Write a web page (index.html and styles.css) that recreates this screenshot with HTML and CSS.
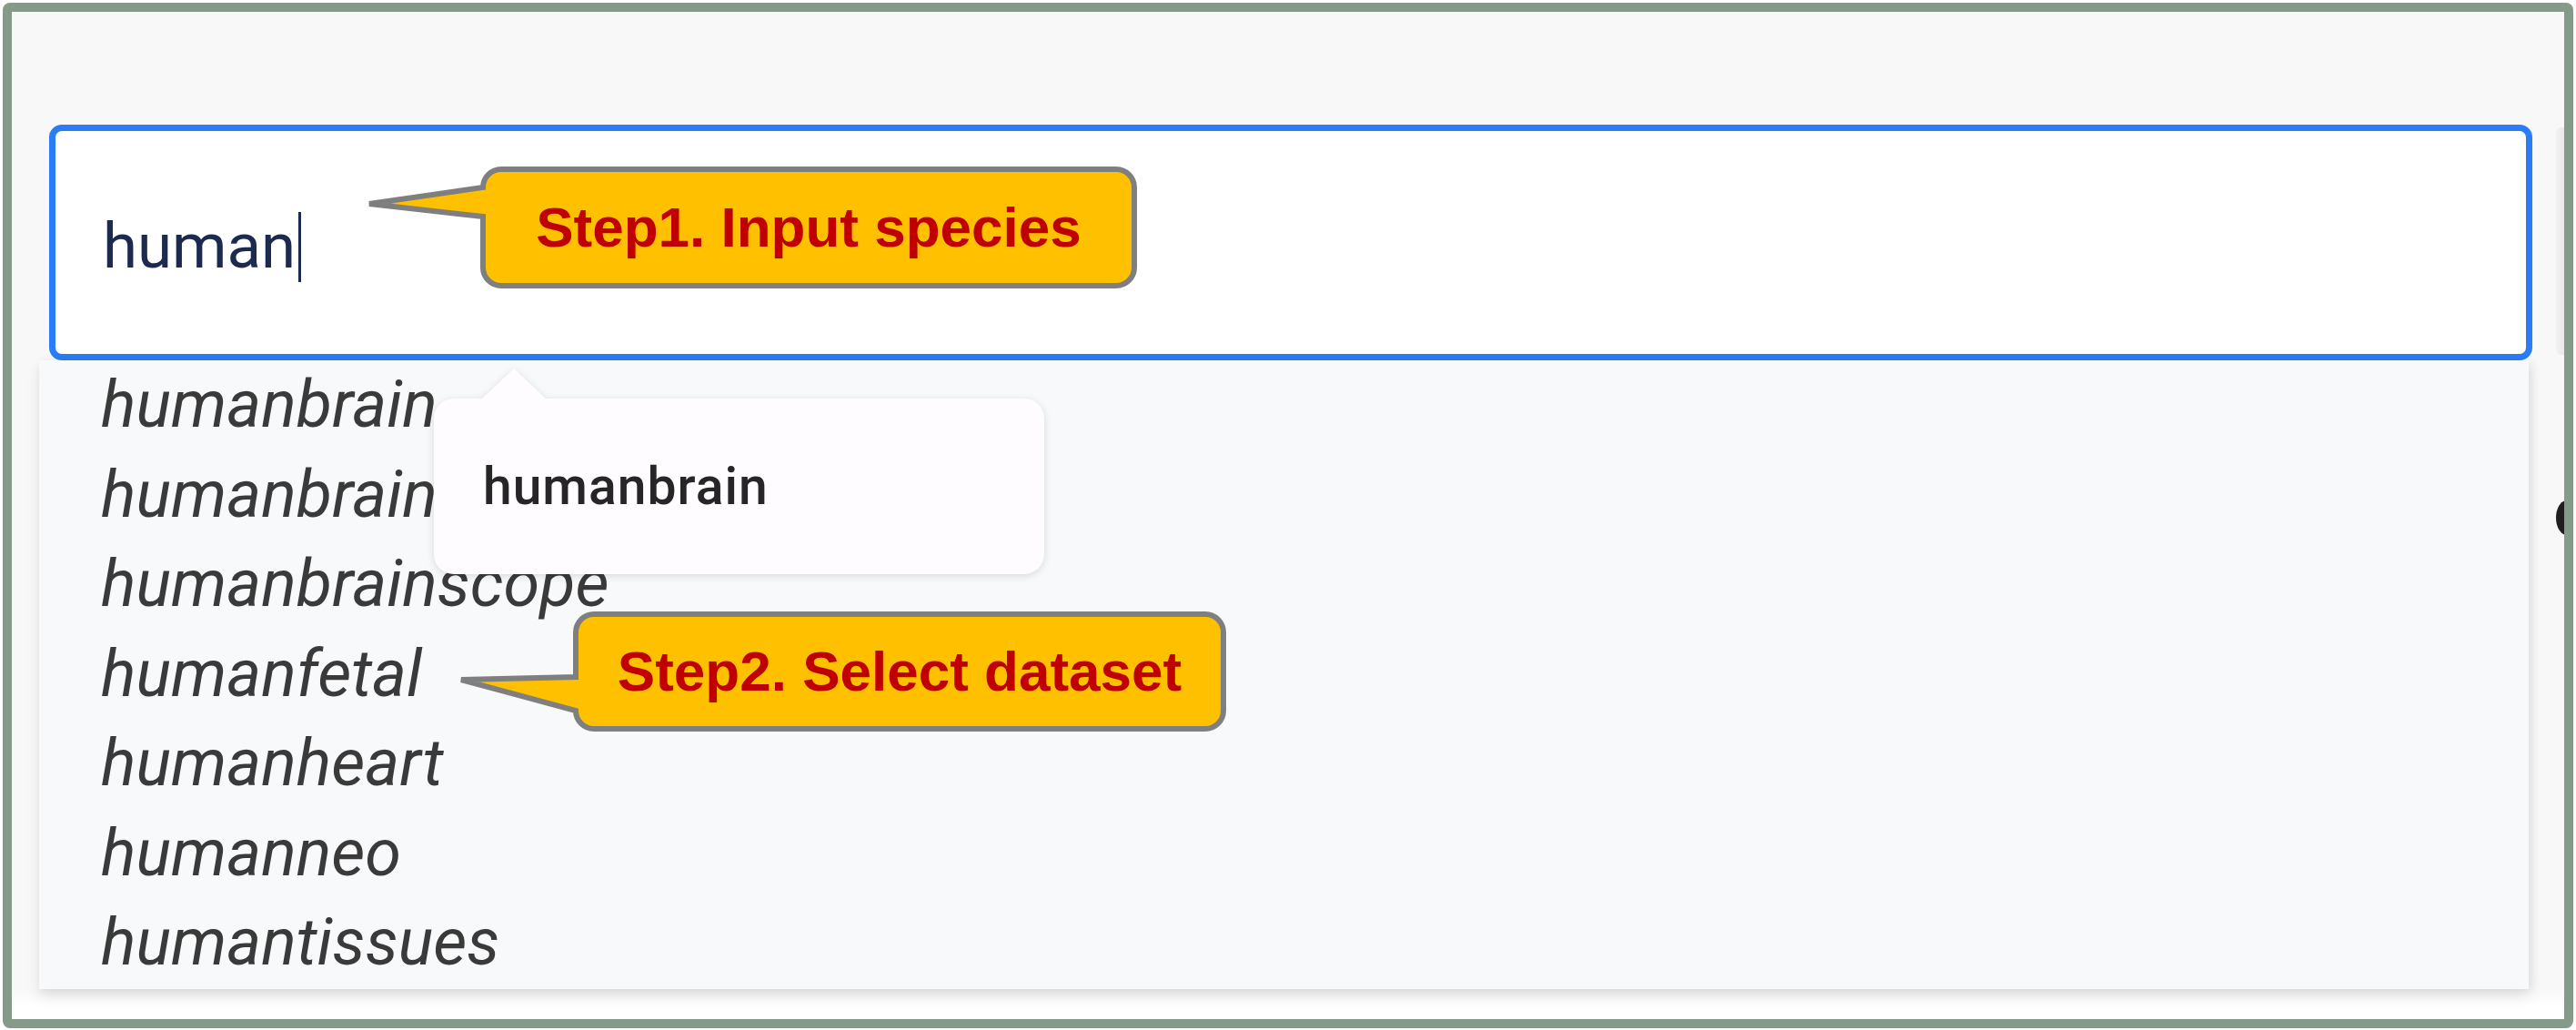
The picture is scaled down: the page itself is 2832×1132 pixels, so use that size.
FILE: index.html
```html
<!DOCTYPE html>
<html lang="en">
<head>
<meta charset="utf-8">
<title>Dataset search</title>
<link rel="stylesheet" href="styles.css">
</head>
<body>
<div class="frame">
  <div class="input-row">
    <div class="search-input"><span class="query">human</span><span class="caret"></span></div>
    <div class="side-strip"></div>
  </div>
  <div class="list-row">
    <ul class="dropdown">
      <li>humanbrain</li>
      <li>humanbrain</li>
      <li>humanbrainscope</li>
      <li>humanfetal</li>
      <li>humanheart</li>
      <li>humanneo</li>
      <li>humantissues</li>
    </ul>
    <div class="side-knob"></div>
  </div>

  <div class="tooltip"><div class="tooltip-card">humanbrain</div></div>

  <div class="callout callout-1">
    <svg class="callout-shape" width="852" height="134" viewBox="-130 0 852 134">
      <path d="M23,3 H699 A20,20 0 0 1 719,23 V111 A20,20 0 0 1 699,131 H23 A20,20 0 0 1 3,111 V55 L-122,41 L3,23 A20,20 0 0 1 23,3 Z"/>
    </svg>
    <span class="callout-text">Step1. Input species</span>
  </div>

  <div class="callout callout-2">
    <svg class="callout-shape" width="848" height="132" viewBox="-130 0 848 132">
      <path d="M23,3 H695 A20,20 0 0 1 715,23 V109 A20,20 0 0 1 695,129 H23 A20,20 0 0 1 3,109 L-123,75 L3,72 V23 A20,20 0 0 1 23,3 Z"/>
    </svg>
    <span class="callout-text">Step2. Select dataset</span>
  </div>
</div>
</body>
</html>
```

FILE: styles.css
```css
html, body {
  margin: 0;
  padding: 0;
  background: #ffffff;
}

body {
  width: 2832px;
  height: 1132px;
  overflow: hidden;
}

.frame {
  position: relative;
  box-sizing: border-box;
  margin: 3px;
  width: 2826px;
  height: 1127px;
  border: 10px solid #869a89;
  border-radius: 8px;
  background: linear-gradient(#f8f8f8 0, #f8f8f8 1075px, #ffffff 1092px);
  overflow: hidden;
  padding: 124px 0 0 30px;
  font-family: Roboto, "Liberation Sans", Arial, sans-serif;
}

.input-row {
  display: flex;
  align-items: flex-start;
  gap: 26px;
  margin-left: 11px;
}

.search-input {
  box-sizing: border-box;
  flex: 0 0 2730px;
  height: 259px;
  border: 7px solid #2b7df7;
  border-radius: 14px;
  background: #ffffff;
  display: flex;
  align-items: center;
  padding: 8px 0 0 52px;
  font-size: 69px;
  color: #1b2a4e;
}

.query {
  line-height: normal;
}

.caret {
  display: inline-block;
  width: 3px;
  height: 77px;
  margin-left: 3px;
  background: #1b2a4e;
  align-self: center;
  position: relative;
  top: 1px;
}

.side-strip {
  flex: 0 0 14px;
  height: 250px;
  margin-top: 3px;
  border-radius: 6px 0 0 6px;
  background: linear-gradient(to right, #f2f2f2, #e3e3e3);
}

.list-row {
  display: flex;
  align-items: flex-start;
  gap: 30px;
}

.dropdown {
  box-sizing: border-box;
  flex: 0 0 2737px;
  height: 691px;
  margin: 0;
  padding: 0 0 0 68px;
  list-style: none;
  background: #f8f9fa;
  box-shadow: 0 8px 14px rgba(0, 0, 0, 0.10), 4px 0 10px rgba(0, 0, 0, 0.05);
}

.dropdown li {
  font-size: 72px;
  font-style: italic;
  line-height: 98.5px;
  color: #3a3a3a;
  white-space: nowrap;
}

.side-knob {
  flex: 0 0 24px;
  height: 38px;
  margin-top: 154px;
  border-radius: 50%;
  background: #1f1f1f;
}

.tooltip {
  position: absolute;
  left: 464px;
  top: 392px;
  padding-top: 33px;
  filter: drop-shadow(0 2px 4px rgba(0, 0, 0, 0.13));
}

.tooltip::before {
  content: "";
  position: absolute;
  left: 51px;
  top: 0;
  width: 74px;
  height: 35px;
  background: #fefcfe;
  clip-path: polygon(50% 0, 100% 100%, 0 100%);
}

.tooltip-card {
  box-sizing: border-box;
  width: 671px;
  height: 193px;
  border-radius: 22px;
  background: #fefcfe;
  display: flex;
  align-items: center;
  padding: 0 0 0 54px;
  font-size: 57px;
  font-weight: 500;
  letter-spacing: 1px;
  color: #262626;
}

.callout {
  position: absolute;
  display: flex;
  align-items: center;
  justify-content: center;
}

.callout-1 {
  left: 515px;
  top: 170px;
  width: 722px;
  height: 134px;
}

.callout-2 {
  left: 617px;
  top: 659px;
  width: 718px;
  height: 132px;
}

.callout-shape {
  position: absolute;
  left: -130px;
  top: 0;
  overflow: visible;
}

.callout-shape path {
  fill: #ffc000;
  stroke: #7f7f7f;
  stroke-width: 6;
  stroke-linejoin: miter;
}

.callout-text {
  position: relative;
  font-family: "Liberation Sans", Arial, sans-serif;
  font-weight: bold;
  font-size: 62px;
  color: #c00000;
  white-space: nowrap;
  padding-bottom: 2px;
}
```
